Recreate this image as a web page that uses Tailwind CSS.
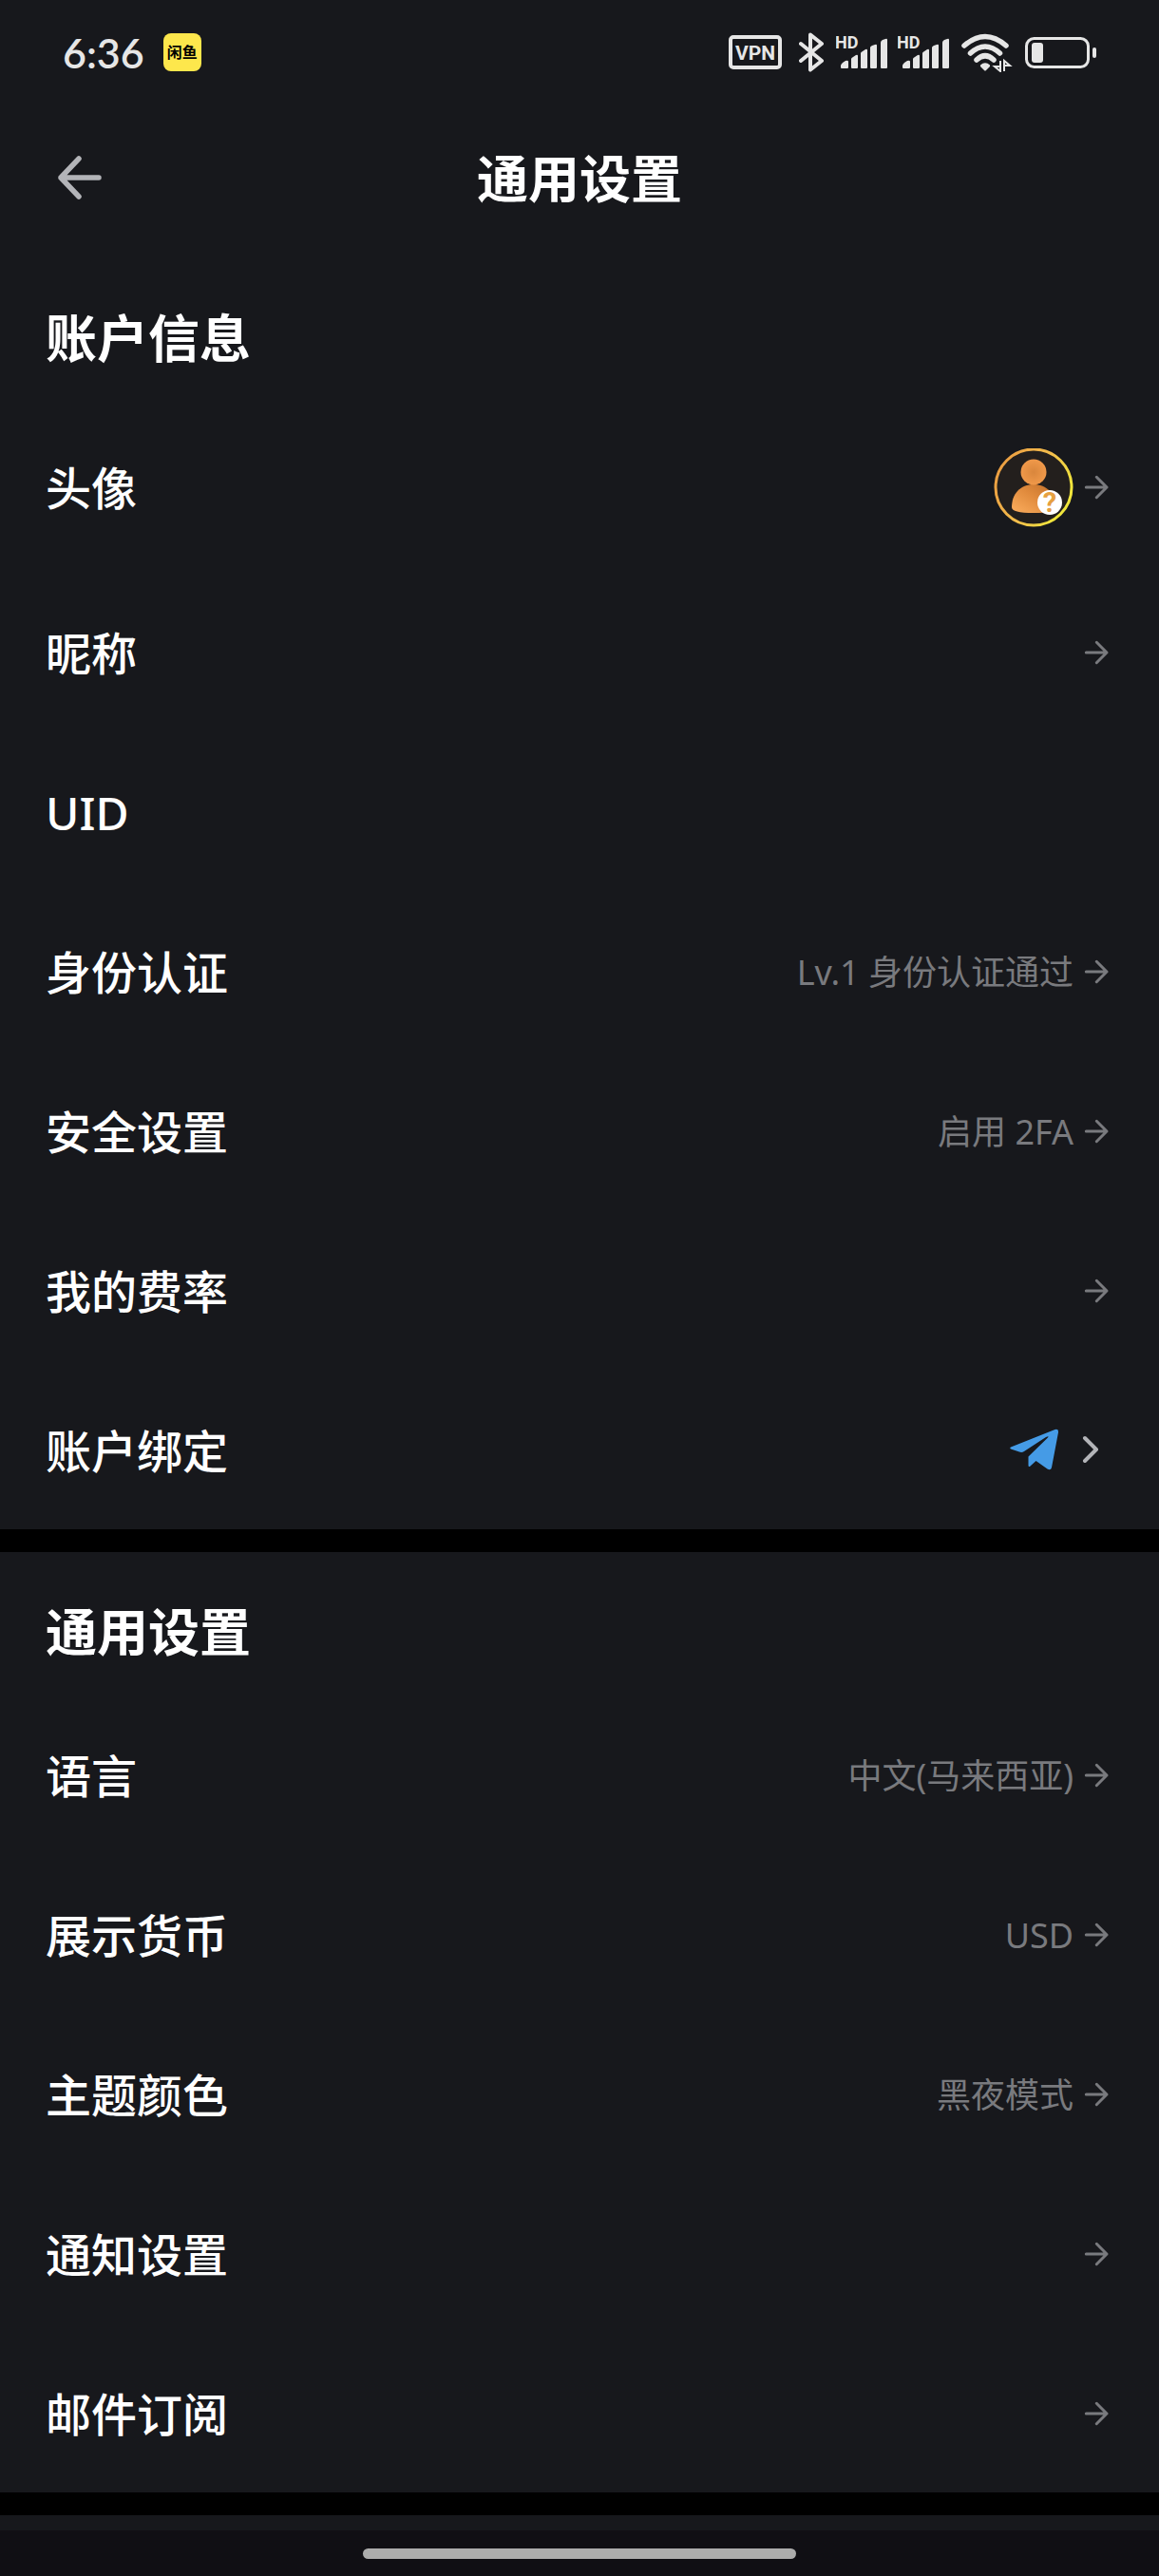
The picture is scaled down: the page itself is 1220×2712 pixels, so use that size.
<!DOCTYPE html>
<html lang="zh-CN">
<head>
    <meta charset="UTF-8">
    <meta name="viewport" content="width=device-width, initial-scale=1.0">
    <title>通用设置</title>
    <script src="https://cdn.jsdelivr.net/npm/@tailwindcss/browser@4"></script>
</head>
<body class="bg-[#17181c] text-white min-h-screen flex flex-col font-['Noto_Sans','Noto_Sans_CJK_SC',sans-serif]">

    <!-- shared icons -->
    <svg class="hidden" aria-hidden="true">
        <symbol id="arrow" viewBox="0 0 36 36">
            <path d="M7.3 17H29M18.3 6.3L29 17L18.3 27.7" fill="none" stroke="currentColor" stroke-width="3" stroke-linecap="round" stroke-linejoin="round"/>
        </symbol>
        <symbol id="signal" viewBox="0 0 54 42">
            <text x="-1" y="17" font-family="Roboto, sans-serif" font-weight="700" font-size="18" fill="currentColor">HD</text>
            <path fill="currentColor" d="M5 35q0-1 2-3l3-2q3-1 3 1v6q0 1-1 1H6q-1 0-1-1zM16 28q0-1 2-2l3-2q2-1 2 1v12q0 1-1 1h-5q-1 0-1-1zM26 22q0-1 2-2l3-2q2-1 2 1v18q0 1-1 1h-5q-1 0-1-1zM36 16q0-1 2-2l3-1q2-1 2 1v23q0 1-1 1h-5q-1 0-1-1zM47 11q0-2 2-3l3-1q2-1 2 1v29q0 1-1 1h-5q-1 0-1-1z"/>
        </symbol>
    </svg>

    <div class="h-[110px] pl-[66px] pr-[66px] flex items-center justify-between text-[#e6e6e6]">
        <div class="flex items-center gap-5">
            <span class="font-['Lato',sans-serif] font-semibold text-[43px] leading-none">6:36</span>
            <span class="size-10 rounded-lg bg-[#fde74c] text-black font-bold text-base flex items-center justify-center">闲鱼</span>
        </div>
        <div class="flex items-center gap-[11px]">
            <svg class="w-[63px] h-[42px]" viewBox="0 0 63 42">
                <rect x="2" y="5" width="52" height="32" rx="3" fill="none" stroke="currentColor" stroke-width="4"/>
                <text x="28" y="29" text-anchor="middle" font-family="Roboto, sans-serif" font-weight="700" font-size="21" fill="currentColor">VPN</text>
            </svg>
            <svg class="w-7 h-[42px]" viewBox="0 0 28 42">
                <path d="M2 12L24 30L12 39.500V2.500L24 12L2 30" fill="none" stroke="currentColor" stroke-width="4" stroke-linecap="round" stroke-linejoin="round"/>
            </svg>
            <svg class="w-[54px] h-[42px]"><use href="#signal"/></svg>
            <svg class="w-[54px] h-[42px]"><use href="#signal"/></svg>
            <svg class="w-[58px] h-[42px]" viewBox="0 0 58 42">
                <g fill="none" stroke="currentColor" stroke-width="5.500" stroke-linecap="round">
                    <path d="M5 14Q27-5 49 14"/>
                    <path d="M11.500 22Q27 8 42.500 22"/>
                    <path d="M18 29Q27 20.500 36 29"/>
                </g>
                <path d="M22 34.500q5-4.500 10 0q.5 1-.5 2l-3.500 3.500q-1 1-2 0L22.500 36.500q-1-1-.5-2z" fill="currentColor"/>
                <path d="M43 30V41L37 36H43M47 41V30L53 35H47" fill="none" stroke="currentColor" stroke-width="2"/>
            </svg>
            <svg class="w-[75px] h-[42px]" viewBox="0 0 75 42">
                <rect x="1.500" y="6.500" width="65" height="30" rx="8" fill="none" stroke="currentColor" stroke-width="3"/>
                <rect x="7" y="11" width="12" height="21" rx="3" fill="currentColor"/>
                <rect x="71" y="16" width="4" height="11" rx="2" fill="currentColor"/>
            </svg>
        </div>
    </div>

    <header class="h-[156px] mb-1.5 px-14 grid grid-cols-[1fr_auto_1fr] items-center">
        <button type="button" aria-label="返回" class="size-14 text-[#b3b4b8]">
            <svg class="size-14" viewBox="0 0 56 56">
                <path d="M48 27H8M27 7L8 27L27 47" fill="none" stroke="currentColor" stroke-width="5.500" stroke-linecap="round" stroke-linejoin="round"/>
            </svg>
        </button>
        <h1 class="text-[54px] leading-16 font-bold">通用设置</h1>
    </header>

    <main class="text-5xl font-medium">
        <section>
            <h2 class="h-[150px] px-12 pt-[52px] text-[54px] leading-16 font-bold">账户信息</h2>
            <a href="#avatar" class="h-[180px] pt-1 px-12 flex items-center justify-between">
                <span>头像</span>
                <span class="flex items-center gap-1.5 text-[#797a7e]">
                    <svg class="size-[84px]" viewBox="0 0 84 84">
                        <defs>
                            <linearGradient id="ring" x1="0" y1="0" x2="1" y2="0.500">
                                <stop offset="0" stop-color="#e9963f"/>
                                <stop offset="0.600" stop-color="#f3bd4c"/>
                                <stop offset="1" stop-color="#f0e53c"/>
                            </linearGradient>
                            <radialGradient id="head">
                                <stop offset="0" stop-color="#d9863c"/>
                                <stop offset="1" stop-color="#f0994a"/>
                            </radialGradient>
                            <linearGradient id="torso" x1="0" y1="1" x2="1" y2="0">
                                <stop offset="0" stop-color="#fcae5e"/>
                                <stop offset="0.550" stop-color="#e08a3c"/>
                                <stop offset="1" stop-color="#c06f2a"/>
                            </linearGradient>
                        </defs>
                        <circle cx="42" cy="41" r="40" fill="#231f1d" stroke="url(#ring)" stroke-width="3"/>
                        <path d="M19 62C19 48 28 38 42 38S65 48 65 62Q65 68 42 68T19 62z" fill="url(#torso)"/>
                        <circle cx="42" cy="25" r="13.500" fill="url(#head)"/>
                        <circle cx="59" cy="57" r="13" fill="#fff"/>
                        <text x="59" y="67" text-anchor="middle" font-family="Roboto, sans-serif" font-weight="700" font-size="29" fill="#e6a040">?</text>
                    </svg>
                    <svg class="size-9"><use href="#arrow"/></svg>
                </span>
            </a>
            <a href="#nickname" class="h-[168px] pt-1 px-12 flex items-center justify-between">
                <span>昵称</span>
                <svg class="size-9 text-[#797a7e]"><use href="#arrow"/></svg>
            </a>
            <div class="h-[168px] pt-1 px-12 flex items-center">
                <span>UID</span>
            </div>
            <a href="#identity" class="h-[168px] pt-1 px-12 flex items-center justify-between">
                <span>身份认证</span>
                <span class="flex items-center gap-1.5 text-4xl font-normal text-[#797a7e]">
                    Lv.1 身份认证通过
                    <svg class="size-9"><use href="#arrow"/></svg>
                </span>
            </a>
            <a href="#security" class="h-[168px] pt-1 px-12 flex items-center justify-between">
                <span>安全设置</span>
                <span class="flex items-center gap-1.5 text-4xl font-normal text-[#797a7e]">
                    启用 2FA
                    <svg class="size-9"><use href="#arrow"/></svg>
                </span>
            </a>
            <a href="#fees" class="h-[168px] pt-1 px-12 flex items-center justify-between">
                <span>我的费率</span>
                <svg class="size-9 text-[#797a7e]"><use href="#arrow"/></svg>
            </a>
            <a href="#binding" class="h-[168px] pt-1 px-12 flex items-center justify-between">
                <span>账户绑定</span>
                <span class="flex items-center gap-1.5 text-[#b3b4b8]">
                    <svg class="w-[84px] h-12" viewBox="0 0 84 48">
                        <path d="M18 19.500L64.500 1Q68.500 0 68 4L61 41Q60 44.500 56.500 42.500L44.500 34L38.500 39.500Q36.500 41 36.500 38.500V29.500L56 10.500Q59.500 7 55 9L32 24Q29.500 25.500 27 24.500L18 21.500Q16.500 20.500 18 19.500z" fill="#459be6"/>
                    </svg>
                    <svg class="size-9" viewBox="0 0 36 36">
                        <path d="M6 4L18 16L6 28" fill="none" stroke="currentColor" stroke-width="4" stroke-linecap="round" stroke-linejoin="round"/>
                    </svg>
                </span>
            </a>
        </section>

        <section class="border-t-24 border-black">
            <h2 class="h-[150px] px-12 pt-[52px] text-[54px] leading-16 font-bold">通用设置</h2>
            <a href="#language" class="h-[168px] pt-1 px-12 flex items-center justify-between">
                <span>语言</span>
                <span class="flex items-center gap-1.5 text-4xl font-normal text-[#797a7e]">
                    中文(马来西亚)
                    <svg class="size-9"><use href="#arrow"/></svg>
                </span>
            </a>
            <a href="#currency" class="h-[168px] pt-1 px-12 flex items-center justify-between">
                <span>展示货币</span>
                <span class="flex items-center gap-1.5 text-4xl font-normal text-[#797a7e]">
                    USD
                    <svg class="size-9"><use href="#arrow"/></svg>
                </span>
            </a>
            <a href="#theme" class="h-[168px] pt-1 px-12 flex items-center justify-between">
                <span>主题颜色</span>
                <span class="flex items-center gap-1.5 text-4xl font-normal text-[#797a7e]">
                    黑夜模式
                    <svg class="size-9"><use href="#arrow"/></svg>
                </span>
            </a>
            <a href="#notifications" class="h-[168px] pt-1 px-12 flex items-center justify-between">
                <span>通知设置</span>
                <svg class="size-9 text-[#797a7e]"><use href="#arrow"/></svg>
            </a>
            <a href="#mail" class="h-[168px] pt-1 px-12 flex items-center justify-between">
                <span>邮件订阅</span>
                <svg class="size-9 text-[#797a7e]"><use href="#arrow"/></svg>
            </a>
        </section>

        <section class="border-t-24 border-black h-10"></section>
    </main>

    <footer class="h-12 bg-[#100f14] flex justify-center pt-[19px]">
        <div class="w-[456px] h-[11px] rounded-full bg-[#acacac]"></div>
    </footer>
</body>
</html>
